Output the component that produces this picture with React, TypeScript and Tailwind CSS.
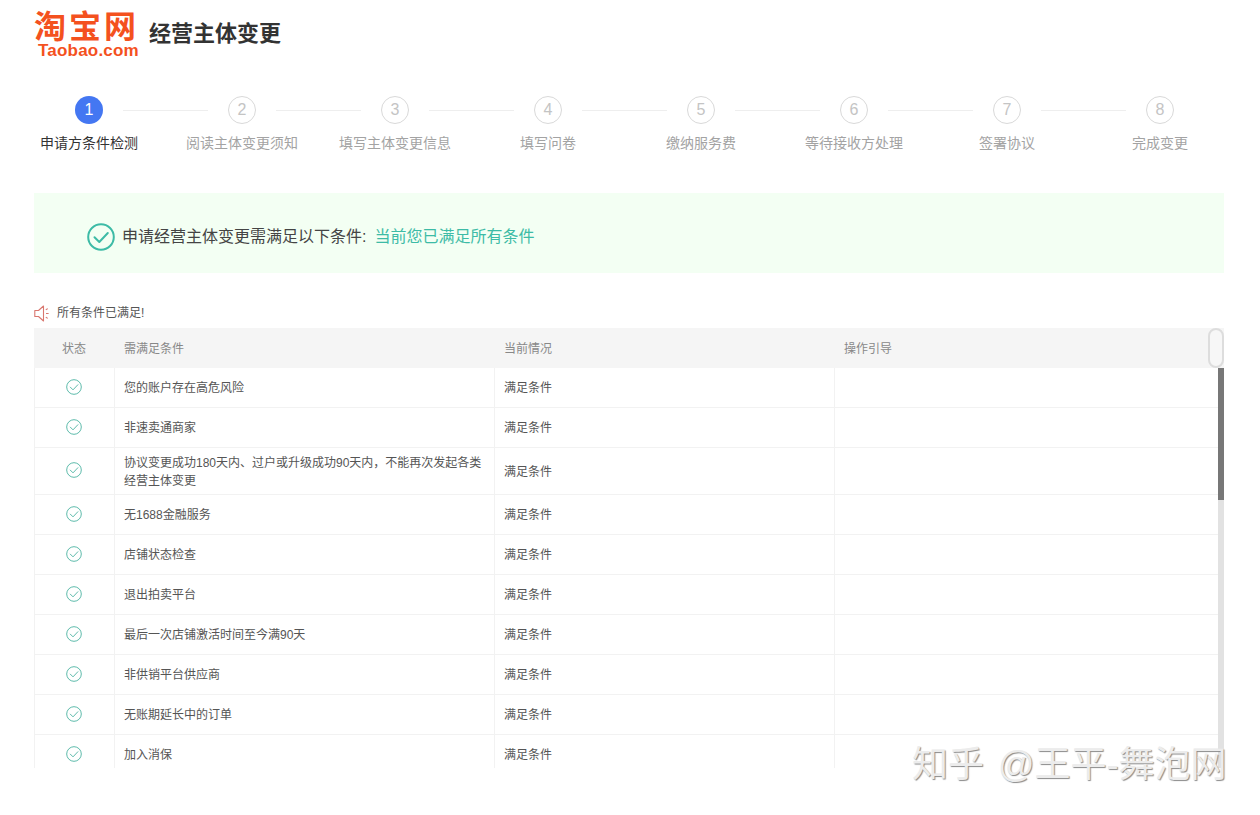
const FONT = "font-['Liberation_Sans','Noto_Sans_CJK_SC',sans-serif]";

const steps = [
  "申请方条件检测",
  "阅读主体变更须知",
  "填写主体变更信息",
  "填写问卷",
  "缴纳服务费",
  "等待接收方处理",
  "签署协议",
  "完成变更",
];

const rows: { text: string; tall?: boolean }[] = [
  { text: "您的账户存在高危风险" },
  { text: "非速卖通商家" },
  { text: "协议变更成功180天内、过户或升级成功90天内，不能再次发起各类经营主体变更", tall: true },
  { text: "无1688金融服务" },
  { text: "店铺状态检查" },
  { text: "退出拍卖平台" },
  { text: "最后一次店铺激活时间至今满90天" },
  { text: "非供销平台供应商" },
  { text: "无账期延长中的订单" },
  { text: "加入消保" },
];

function CheckCircle({ size, width, color = "#3dbba6" }: { size: number; width: number; color?: string }) {
  return (
    <svg width={size} height={size} viewBox="0 0 28 28" fill="none" stroke={color} strokeWidth={width}>
      <circle cx="14" cy="14" r="12.8" />
      <path d="M7.5 14.2l4.8 4.8 8.5-9" strokeLinecap="round" strokeLinejoin="round" />
    </svg>
  );
}

function Speaker() {
  return (
    <svg width="15" height="17" viewBox="0 0 15 17" fill="none" stroke="#d9776f" strokeWidth="1.1">
      <path d="M9.5 1L4.5 5.5H0.8v6h3.7l5 4.5z" strokeLinejoin="round" />
      <path d="M11.8 4.8l2-1.2M12 8.5h2.6M11.8 12.2l2 1.2" />
    </svg>
  );
}

function Steps() {
  return (
    <div className="-ml-[21.5px] mt-[38px] w-[1224px]">
      <div className="flex items-center pl-[62.5px]">
        {steps.map((_, i) => (
          <div key={i} className="flex items-center">
            <div
              className={
                i === 0
                  ? "flex h-7 w-7 shrink-0 items-center justify-center rounded-full bg-[#4477f2] text-base text-white"
                  : "flex h-7 w-7 shrink-0 items-center justify-center rounded-full border border-[#d9d9d9] text-base text-[#c4c4c4]"
              }
            >
              {i + 1}
            </div>
            {i < steps.length - 1 && <div className="mx-5 h-px w-[85px] bg-[#eeeeee]" />}
          </div>
        ))}
      </div>
      <div className="mt-[9px] grid grid-cols-8">
        {steps.map((s, i) => (
          <div
            key={s}
            className={i === 0 ? "text-center text-sm leading-[20px] text-[#333333]" : "text-center text-sm leading-[20px] text-[#a3a3a3]"}
          >
            {s}
          </div>
        ))}
      </div>
    </div>
  );
}

function Table() {
  return (
    <div className="relative h-[440px] overflow-hidden text-xs text-[#555555]">
      <div className="flex h-10 items-center bg-[#f5f5f5] pt-[2px] text-[#888888]">
        <div className="w-20 text-center">状态</div>
        <div className="w-[380px] pl-[10px]">需满足条件</div>
        <div className="w-[340px] pl-[10px]">当前情况</div>
        <div className="pl-[10px]">操作引导</div>
      </div>
      <div className="flex">
        <div className="w-[1184px] shrink-0">
          {rows.map((r) => (
            <div key={r.text} className={r.tall ? "flex h-[47px] border-b border-[#f2f2f2]" : "flex h-10 border-b border-[#f2f2f2]"}>
              <div className="flex w-[81px] shrink-0 items-center justify-center border-x border-[#f2f2f2] pb-[2px] pr-px">
                <CheckCircle size={16} width={1.6} color="#4fb5a3" />
              </div>
              <div
                className={
                  r.tall
                    ? "flex w-[380px] shrink-0 items-center border-r border-[#f2f2f2] pl-[9px] pr-[10px] pt-[2px] leading-[18px]"
                    : "flex w-[380px] shrink-0 items-center border-r border-[#f2f2f2] pl-[9px] pr-[10px] leading-[18px]"
                }
              >
                {r.text}
              </div>
              <div
                className={
                  r.tall
                    ? "flex w-[340px] shrink-0 items-center border-r border-[#f2f2f2] pl-[9px] pt-[2px]"
                    : "flex w-[340px] shrink-0 items-center border-r border-[#f2f2f2] pl-[9px]"
                }
              >
                满足条件
              </div>
              <div className="flex-1" />
            </div>
          ))}
        </div>
        <div className="w-[6px] self-stretch bg-[#e2e2e2]">
          <div className="h-[132px] bg-[#777777]" />
        </div>
      </div>
      {/* 表头右侧的滚动条滑块 */}
      <div className="absolute right-0 top-0 h-10 w-4 rounded-lg border-2 border-[#dddddd] bg-[#f7f7f7]" />
    </div>
  );
}

export default function App() {
  return (
    <div className={`relative h-[815px] overflow-hidden bg-white pl-[34px] ${FONT}`}>
      <div className="w-[1190px]">
        <div className="flex items-start pt-[12px]">
          <div className="w-[105px] text-[#f4511e]">
            <div className="text-[32px] font-bold leading-[31px] tracking-[3px]">淘宝网</div>
            <div className="pl-[4px] text-[17px] font-bold leading-[15px] tracking-[0.2px]">Taobao.com</div>
          </div>
          <h1 className="ml-[10px] mt-[8px] text-[22px] font-bold leading-[28px] text-[#333333]">经营主体变更</h1>
        </div>

        <Steps />

        <div className="mt-[40px] flex h-20 items-center bg-[#f3fff3] pl-[53px] pt-[8px]">
          <CheckCircle size={28} width={2} />
          <span className="ml-[7px] text-base text-[#444444]">申请经营主体变更需满足以下条件:</span>
          <span className="ml-2 text-base text-[#3dbba6]">当前您已满足所有条件</span>
        </div>

        <div className="mt-[32px] flex h-[16px] items-center">
          <Speaker />
          <span className="ml-2 text-xs text-[#555555]">所有条件已满足!</span>
        </div>
        <div className="mt-[7px]">
          <Table />
        </div>
      </div>

      {/* 知乎水印 */}
      <div className="absolute left-[912px] top-[743px] whitespace-nowrap text-[36px] leading-[44px] text-[#ececec] [text-shadow:1px_1px_1px_#8a8a8a] [word-spacing:4px]">
        知乎 @王平-舞泡网
      </div>
    </div>
  );
}
